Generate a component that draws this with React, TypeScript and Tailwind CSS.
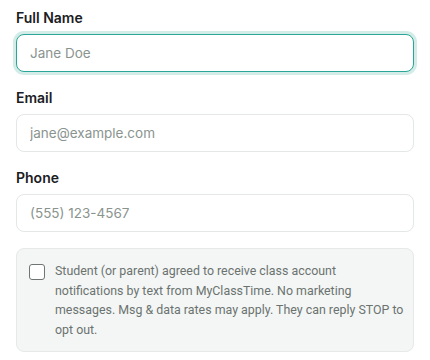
import { useState } from 'react';

const fields = [
  { id: 'name', label: 'Full Name', placeholder: 'Jane Doe', type: 'text' },
  { id: 'email', label: 'Email', placeholder: 'jane@example.com', type: 'email' },
  { id: 'phone', label: 'Phone', placeholder: '(555) 123-4567', type: 'tel' },
];

export default function App() {
  const [agreed, setAgreed] = useState(false);

  return (
    <div className="min-h-screen bg-white px-4 pt-2 font-['Inter',sans-serif]">
      <div className="flex flex-col gap-4">
        {fields.map(f => (
          <div key={f.id} className="flex flex-col gap-[6px]">
            <label htmlFor={f.id} className="text-sm leading-5 font-semibold text-[#1b201f]">
              {f.label}
            </label>
            <input
              id={f.id}
              type={f.type}
              placeholder={f.placeholder}
              className={`h-[38px] w-full rounded-lg border bg-white px-[13px] text-[13.5px] text-[#1b201f] placeholder:text-[#8a948f] outline-none ${
                f.id === 'name'
                  ? 'border-[#2ba597] ring-[3px] ring-[#d3ece8]'
                  : 'border-[#e3e7e5]'
              }`}
            />
          </div>
        ))}

        <label className="flex items-start gap-[10px] overflow-hidden rounded-lg border border-[#e6e9e7] bg-[#f4f6f5] py-3 pl-3 pr-1 cursor-pointer">
          <input
            type="checkbox"
            checked={agreed}
            onChange={e => setAgreed(e.target.checked)}
            className="mt-[3px] h-4 w-4 shrink-0 appearance-none rounded-[3px] border border-[#6f7572] bg-white checked:bg-[#2ba597] checked:border-[#2ba597]"
          />
          <span className="whitespace-nowrap font-['Roboto',sans-serif] text-[12.4px] leading-[19.5px] text-[#6b7370]">
            Student (or parent) agreed to receive class account<br />
            notifications by text from MyClassTime. No marketing<br />
            messages. Msg &amp; data rates may apply. They can reply STOP to<br />
            opt out.
          </span>
        </label>
      </div>
    </div>
  );
}
